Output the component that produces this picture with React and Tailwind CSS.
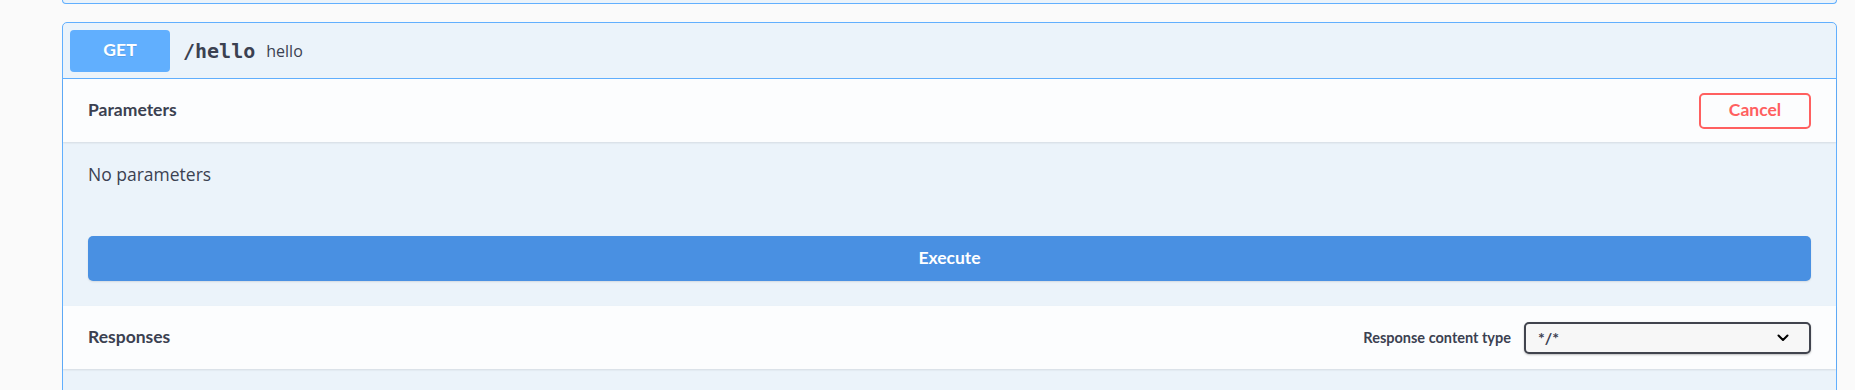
import React from 'react';

const titleFont = "font-['Lato','Liberation_Sans',sans-serif]";

export default function App() {
  return (
    <div className="min-h-screen bg-[#fafafa] pl-[62px] pr-[18px] text-[#3b4151]">
      {/* previous operation block, only its bottom edge visible */}
      <div className="h-[4px] rounded-b-[5px] border border-t-0 border-[#61affe] bg-[#ebf3fa]" />

      {/* GET /hello */}
      <div className="mt-[18px] rounded-[5px] border border-[#61affe] bg-[#ebf3fa]">
        <div className="flex h-[56px] items-center border-b border-[#61affe] px-[7px]">
          <span
            className={`flex h-[42px] w-[100px] items-center justify-center rounded-[4px] bg-[#61affe] text-[17.5px] font-bold text-white [text-shadow:0_1px_0_rgba(0,0,0,0.1)] ${titleFont}`}
          >
            GET
          </span>
          <span className="pl-[13px] pr-[11px] font-['DejaVu_Sans_Mono',monospace] text-[20px] font-semibold text-[#3b4151]">
            /hello
          </span>
          <span className="font-['Open_Sans',sans-serif] text-[16px] text-[#3b4151]">hello</span>
        </div>

        {/* Parameters */}
        <div className="flex h-[63px] items-center justify-between bg-[#fcfdfe] px-[25px] shadow-[0_1px_2px_rgba(0,0,0,0.1)]">
          <h4 className={`text-[17.5px] font-bold ${titleFont}`}>Parameters</h4>
          <button
            className={`flex h-[36px] w-[112px] items-center justify-center rounded-[5px] border-2 border-[#ff6060] bg-transparent text-[17.5px] font-bold text-[#ff6060] ${titleFont}`}
          >
            Cancel
          </button>
        </div>

        <div className="px-[25px] pt-[20px] pb-[25px]">
          <p className="font-['Open_Sans',sans-serif] text-[17.5px] leading-[24px] text-[#3b4151]">No parameters</p>
          <button
            className={`mt-[50px] flex h-[45px] w-full items-center justify-center rounded-[5px] bg-[#4990e2] text-[17.5px] font-bold text-white shadow-[0_1px_2px_rgba(0,0,0,0.1)] ${titleFont}`}
          >
            Execute
          </button>
        </div>

        {/* Responses */}
        <div className="flex h-[63px] items-center justify-between bg-[#fcfdfe] px-[25px] shadow-[0_1px_2px_rgba(0,0,0,0.1)]">
          <h4 className={`text-[17.5px] font-bold ${titleFont}`}>Responses</h4>
          <div className="flex items-center">
            <span className={`mr-[13px] text-[14.5px] font-bold ${titleFont}`}>Response content type</span>
            <div
              className={`flex h-[32px] w-[287px] items-center justify-between rounded-[5px] border-2 border-[#41444e] bg-[#f7f7f7] pl-[12px] pr-[20px] text-[16px] font-bold shadow-[0_1px_2px_rgba(0,0,0,0.25)] ${titleFont}`}
            >
              <span>*/*</span>
              <svg width="12" height="8" viewBox="0 0 12 8" fill="none">
                <path d="M1.5 1.5L6 6L10.5 1.5" stroke="#000" strokeWidth="2" strokeLinecap="round" strokeLinejoin="round" />
              </svg>
            </div>
          </div>
        </div>

        <div className="h-[60px]" />
      </div>
    </div>
  );
}
